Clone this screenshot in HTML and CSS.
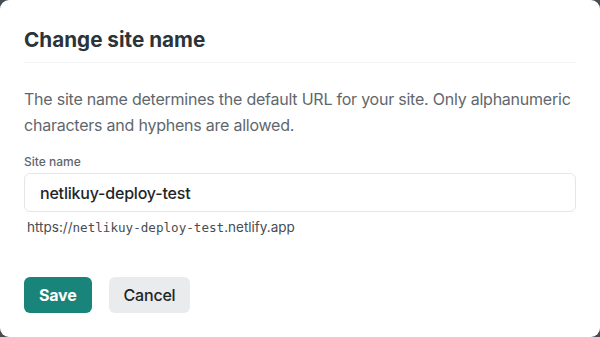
FILE: index.html
```html
<!DOCTYPE html>
<html lang="en">
<head>
    <meta charset="UTF-8">
    <meta name="viewport" content="width=device-width, initial-scale=1.0">
    <title>Change site name</title>
    <link rel="stylesheet" href="styles.css">
</head>
<body>
    <div class="modal">
        <h2 class="modal-title">Change site name</h2>

        <p class="modal-text">The site name determines the default URL for your site. Only alphanumeric characters and hyphens are allowed.</p>

        <label class="field-label" for="site-name">Site name</label>
        <input class="field-input" id="site-name" type="text" value="netlikuy-deploy-test">
        <div class="field-hint">https://<code>netlikuy-deploy-test</code>.netlify.app</div>

        <div class="actions">
            <button class="btn-save">Save</button>
            <button class="btn-cancel">Cancel</button>
        </div>
    </div>
</body>
</html>
```

FILE: styles.css
```css
html, body {
    margin: 0;
    height: 100%;
}
body {
    background: #444d52;
    font-family: Inter, "Noto Sans", sans-serif;
}
.modal {
    box-sizing: border-box;
    height: 337px;
    background: #fff;
    border-radius: 9px;
    padding: 0 24px;
}
.modal-title {
    margin: 0;
    padding: 28px 0 10px;
    font-size: 20.7px;
    line-height: 24px;
    font-weight: 700;
    color: #2a3439;
    border-bottom: 1px solid #f3f4f5;
}
.modal-text {
    margin: 23px 0 0;
    font-size: 16px;
    line-height: 26px;
    letter-spacing: -0.23px;
    color: #5f676e;
}
.field-label {
    display: block;
    margin-top: 16px;
    font-size: 12px;
    line-height: 16px;
    font-weight: 500;
    color: #5f676e;
}
.field-input {
    box-sizing: border-box;
    display: block;
    width: 100%;
    height: 39px;
    margin-top: 3px;
    padding: 0 15px;
    border: 1px solid #e4e6e8;
    border-radius: 6px;
    font-family: inherit;
    font-size: 16px;
    font-weight: 500;
    letter-spacing: -0.2px;
    color: #1e2529;
    outline: none;
}
.field-hint {
    margin-top: 6px;
    padding-left: 3px;
    font-size: 13.5px;
    line-height: 18px;
    color: #464d53;
}
.field-hint code {
    font-family: "DejaVu Sans Mono", monospace;
    font-size: 12.6px;
}
.actions {
    display: flex;
    gap: 17px;
    margin-top: 40px;
}
.actions button {
    height: 36px;
    padding: 0 15px;
    border: none;
    border-radius: 6px;
    font-family: inherit;
    font-size: 16px;
    letter-spacing: -0.2px;
    cursor: pointer;
}
.btn-save {
    background: #19847a;
    color: #fff;
    font-weight: 700;
}
.btn-cancel {
    background: #e9ebed;
    color: #1e2529;
    font-weight: 500;
}
```
